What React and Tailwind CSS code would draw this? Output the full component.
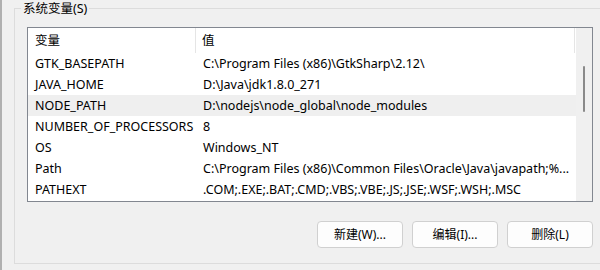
import React from "react";

const rows = [
  ["GTK_BASEPATH", "C:\\Program Files (x86)\\GtkSharp\\2.12\\"],
  ["JAVA_HOME", "D:\\Java\\jdk1.8.0_271"],
  ["NODE_PATH", "D:\\nodejs\\node_global\\node_modules", true],
  ["NUMBER_OF_PROCESSORS", "8"],
  ["OS", "Windows_NT"],
  ["Path", "C:\\Program Files (x86)\\Common Files\\Oracle\\Java\\javapath;%..."],
  ["PATHEXT", ".COM;.EXE;.BAT;.CMD;.VBS;.VBE;.JS;.JSE;.WSF;.WSH;.MSC"],
];

const font = { fontFamily: '"Noto Sans", "Noto Sans CJK SC", sans-serif' };

export default function App() {
  return (
    <div
      className="w-[600px] h-[270px] bg-[#f0f0f0] border-l-2 border-[#b0b0b0] overflow-hidden text-[12px] text-black"
      style={font}
    >
      <div className="relative ml-[12px] mt-[8px] w-[600px] h-[256px] border border-[#dcdcdc] border-r-0 pl-[12px] pt-[18px]">
        <div className="absolute left-[6px] top-[-9px] px-[2px] bg-[#f0f0f0] leading-[17px] text-[12.5px]">
          系统变量(S)
        </div>
        <div className="w-[566px] h-[175px] border border-[#828790] bg-white flex text-[12.5px]">
          <div className="w-[548px] flex flex-col">
            <div className="h-[25px] flex items-center border-r border-[#e5e5e5] mr-[1px]">
              <div className="w-[168px] pl-[7px] pt-[2px] h-full flex items-center border-r border-[#e5e5e5]">变量</div>
              <div className="pl-[6px] pt-[2px]">值</div>
            </div>
            {rows.map(([k, v, hl]) => (
              <div
                key={k}
                className={
                  "h-[21px] pt-[1px] flex items-center whitespace-nowrap " +
                  (hl ? "bg-[#efefef]" : "")
                }
              >
                <div className="w-[175px] pl-[7px]">{k}</div>
                <div>{v}</div>
              </div>
            ))}
          </div>
          <div className="w-[16px] bg-[#f0f0f0] relative">
            <div className="absolute left-[7px] top-[38px] w-[2px] h-[46px] rounded-full bg-[#8a8a8a]" />
          </div>
        </div>
        <div className="w-[566px] flex justify-end gap-[9px] mt-[19px]">
          {["新建(W)...", "编辑(I)...", "删除(L)"].map((t) => (
            <div
              key={t}
              className="w-[86px] h-[27px] rounded-[4px] border border-[#d0d0d0] bg-[#fdfdfd] flex items-center justify-center"
            >
              {t}
            </div>
          ))}
        </div>
      </div>
    </div>
  );
}
